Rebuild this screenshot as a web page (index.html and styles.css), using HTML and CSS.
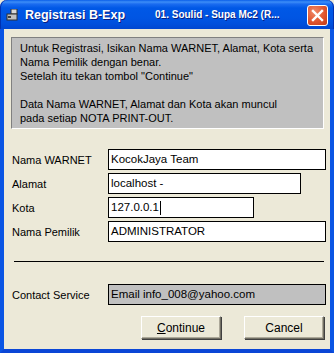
FILE: index.html
```html
<!DOCTYPE html>
<html>
<head>
<meta charset="utf-8">
<link rel="stylesheet" href="styles.css">
</head>
<body>
<div class="window">
  <div class="titlebar">
    <svg class="appicon" width="12" height="12" viewBox="0 0 12 12">
      <rect x="5" y="0" width="6" height="5" fill="#d8d8d8" stroke="#303030" stroke-width="1"/>
      <rect x="1" y="5" width="10" height="6" fill="#c0c0c0" stroke="#303030" stroke-width="1"/>
      <rect x="2" y="7" width="3" height="2" fill="#404040"/>
    </svg>
    <span class="title">Registrasi B-Exp</span>
    <span class="subtitle">01. Soulid - Supa Mc2 (R...</span>
    <div class="close">
      <svg width="13" height="13" viewBox="0 0 13 13">
        <path d="M2 2 L11 11 M11 2 L2 11" stroke="#fff" stroke-width="2.4" stroke-linecap="square"/>
      </svg>
    </div>
  </div>
  <div class="client">
    <div class="info">
      <div>Untuk Registrasi, Isikan Nama WARNET, Alamat, Kota serta</div>
      <div>Nama Pemilik dengan benar.</div>
      <div>Setelah itu tekan tombol "Continue"</div>
      <div>&nbsp;</div>
      <div>Data Nama WARNET, Alamat dan Kota akan muncul</div>
      <div>pada setiap NOTA PRINT-OUT.</div>
    </div>
    <div class="form">
      <div class="row"><span class="label">Nama WARNET</span><div class="field w1">KocokJaya Team</div></div>
      <div class="row"><span class="label">Alamat</span><div class="field w2">localhost -</div></div>
      <div class="row"><span class="label">Kota</span><div class="field w3">127.0.0.1<span class="caret"></span></div></div>
      <div class="row"><span class="label">Nama Pemilik</span><div class="field w1">ADMINISTRATOR</div></div>
    </div>
    <div class="sep"></div>
    <div class="row contact"><span class="label">Contact Service</span><div class="field grey w1">Email info_008@yahoo.com</div></div>
    <div class="buttons">
      <div class="btn"><u>C</u>ontinue</div>
      <div class="btn">Cancel</div>
    </div>
  </div>
</div>
</body>
</html>
```
FILE: styles.css
```css
html, body { margin: 0; padding: 0; background: #ece9d8; }
body { width: 334px; height: 353px; overflow: hidden; }
.window { width: 334px; height: 353px; display: flex; flex-direction: column; font-family: "Liberation Sans", Arial, sans-serif; font-size: 11px; color: #000; }
.titlebar {
  height: 29px; flex: none; position: relative; display: flex; align-items: center;
  border-radius: 7px 7px 0 0; white-space: nowrap;
  background: linear-gradient(#0a5ee9 0px, #3d8ef7 2px, #1b6cf0 4px, #0058e6 8px, #0055e3 18px, #004fdc 24px, #0046d0 29px);
  box-shadow: inset 1px 0 0 #0030b0, inset -1px 0 0 #0030b0;
}
.appicon { margin-left: 6px; flex: none; }
.title { margin-left: 7px; color: #fff; font-family: "Liberation Sans", sans-serif; font-weight: bold; font-size: 12.5px; text-shadow: 1px 1px 0 #0a1e80; }
.subtitle { margin-left: 30px; color: #fff; font-family: "Liberation Sans", sans-serif; font-weight: bold; font-size: 10px; text-shadow: 1px 1px 0 #0a1e80; }
.close {
  position: absolute; left: 307px; top: 5px; width: 19px; height: 19px;
  border: 1px solid #fff; border-radius: 3px;
  background: radial-gradient(circle at 35% 30%, #f08a6a 0%, #e0552e 55%, #c23a16 100%);
  display: flex; align-items: center; justify-content: center;
}
.client {
  flex: 1; background: #ece9d8;
  border-left: 4px solid #0a55e4; border-right: 4px solid #0a55e4; border-bottom: 4px solid #0a46d6;
  padding: 8px 3px 0 3px; display: flex; flex-direction: column;
}
.info {
  margin: 0 3px 0 4px; height: 92px; box-sizing: border-box; background: #c0c0c0;
  border-top: 1px solid #808080; border-left: 1px solid #808080;
  border-right: 1px solid #fff; border-bottom: 1px solid #fff;
  padding: 3px 0 0 8px; line-height: 14px; white-space: nowrap;
}
.form { margin-top: 20px; display: flex; flex-direction: column; gap: 3px; }
.row { display: flex; align-items: center; height: 21px; }
.label { width: 96px; padding-left: 5px; flex: none; }
.field {
  height: 19px; border: 1px solid #000; background: #fff; box-sizing: content-box;
  padding-left: 2px; line-height: 19px; display: flex; align-items: center; font-size: 11.5px;
}
.w1 { width: 214px; }
.w2 { width: 189px; }
.w3 { width: 142px; }
.grey { background: #c0c0c0; }
.caret { display: inline-block; width: 1px; height: 14px; background: #000; margin-left: 1px; }
.sep { margin: 19px 3px 0 7px; height: 1px; background: #000; }
.contact { margin-top: 22px; }
.buttons { margin-top: 11px; display: flex; justify-content: flex-end; gap: 23px; padding-right: 3px; }
.btn {
  width: 78px; height: 21px; display: flex; align-items: center; justify-content: center;
  background: #ece9d8; font-size: 12px;
  border-top: 1px solid #fff; border-left: 1px solid #fff;
  border-right: 1px solid #716f64; border-bottom: 1px solid #716f64;
  box-shadow: 1px 1px 0 #404040, inset -1px -1px 0 #aca899;
}
```
